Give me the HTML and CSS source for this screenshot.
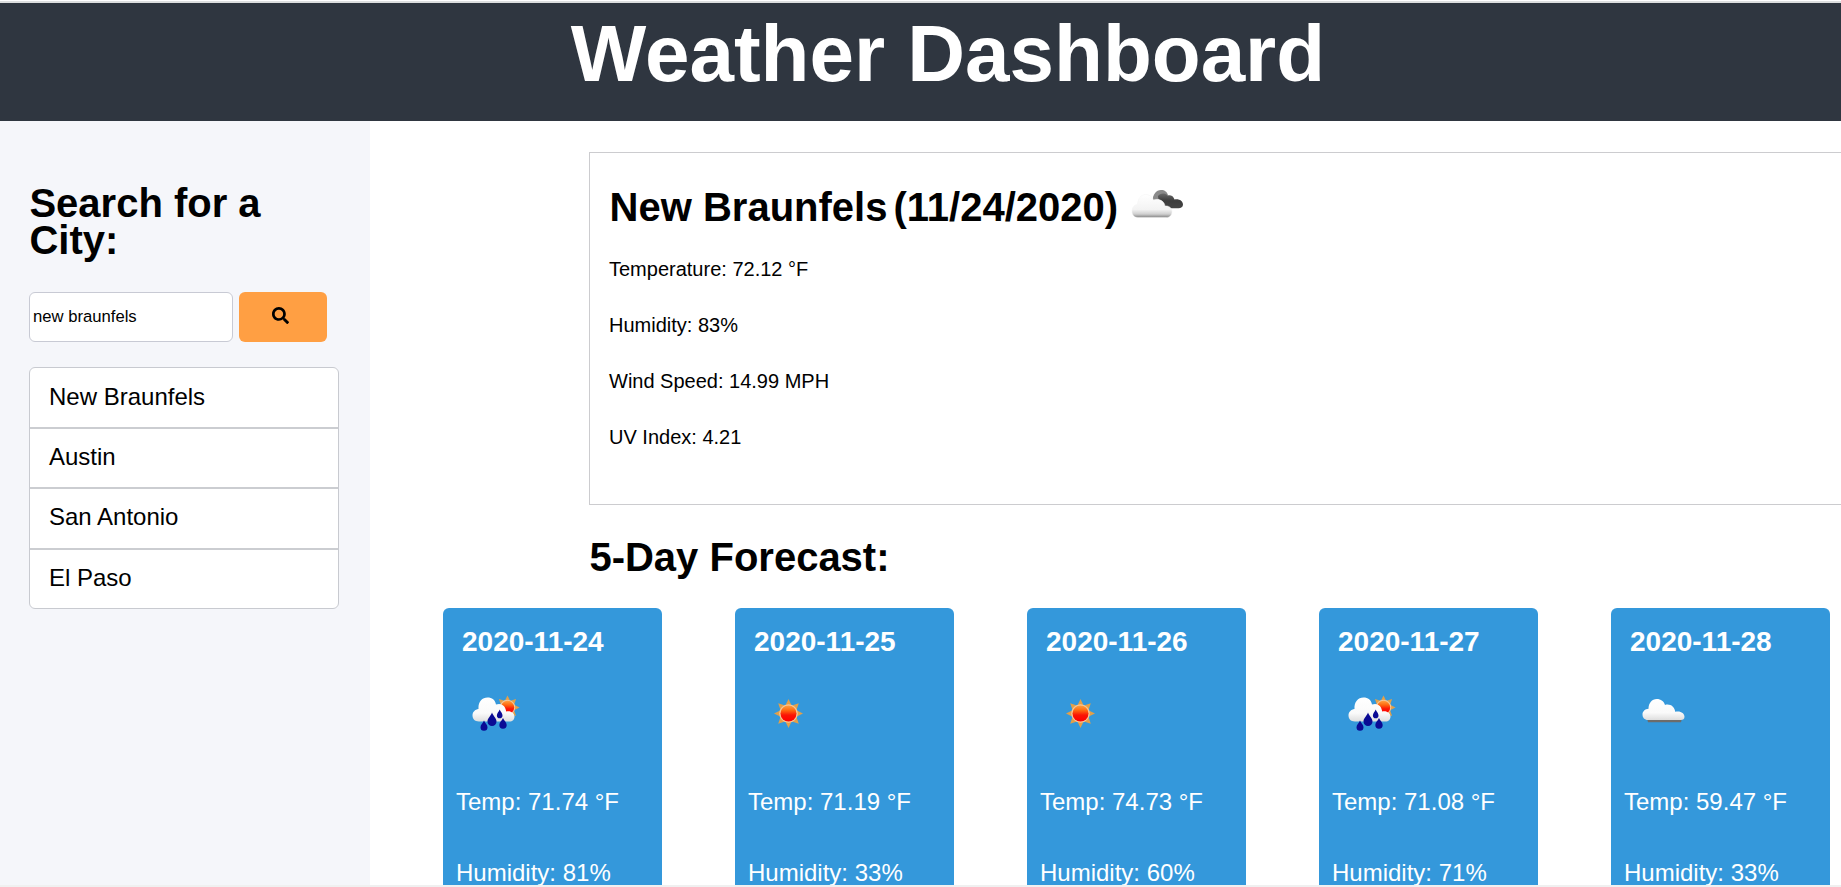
FILE: index.html
```
<!DOCTYPE html>
<html lang="en">
<head>
<meta charset="utf-8">
<title>Weather Dashboard</title>
<link rel="stylesheet" href="styles.css">
</head>
<body>
<svg class="defs" width="0" height="0" aria-hidden="true">
  <defs>
    <linearGradient id="cloudFill" x1="0" y1="0" x2="0" y2="1">
      <stop offset="0" stop-color="#ffffff"/><stop offset=".65" stop-color="#fafafa"/><stop offset="1" stop-color="#dedede"/>
    </linearGradient>
    <linearGradient id="shadeFill" x1="0" y1="0" x2="0" y2="1">
      <stop offset="0" stop-color="#ffffff"/><stop offset=".65" stop-color="#f3f3f3"/><stop offset=".85" stop-color="#d0d0d0"/><stop offset="1" stop-color="#858585"/>
    </linearGradient>
    <linearGradient id="darkFill" x1="0" y1="0" x2="0" y2="1">
      <stop offset="0" stop-color="#6a6a6a"/><stop offset=".5" stop-color="#3c3c3c"/><stop offset="1" stop-color="#444444"/>
    </linearGradient>
    <linearGradient id="sunFill" x1="0" y1="0" x2="0" y2="1">
      <stop offset="0" stop-color="#ffa040"/><stop offset=".3" stop-color="#ff6a10"/><stop offset=".6" stop-color="#fb1505"/><stop offset="1" stop-color="#ff0000"/>
    </linearGradient>
    <symbol id="sun" viewBox="0 0 30 30">
      <path fill="#e2a04a" d="M15 .5l3 6.200h-6zM15 29.500l-3-6.200h6zM.5 15l6.200-3v6zM29.500 15l-6.200 3v-6zM4.700 4.700l6.800 2.300-4.500 4.500zM25.300 4.700l-2.300 6.800-4.500-4.500zM4.700 25.300l2.300-6.800 4.500 4.500zM25.300 25.300l-6.800-2.300 4.500-4.500z"/>
      <circle cx="15" cy="15" r="9.300" fill="#f6c79a"/>
      <circle cx="15" cy="15" r="8" fill="url(#sunFill)"/>
    </symbol>
    <symbol id="rain" viewBox="0 0 63 63">
      <use href="#sun" x="30" y="13" width="25" height="25"/>
      <path fill="url(#cloudFill)" d="M14 39.500C9.500 39.500 7.500 36.500 7.500 33.500C7.500 30 10 27.500 13.500 27C13 20 17 15.500 22.500 15.500C27 15.500 30.300 18 31 22.500C36 20.500 40.500 23.500 41.200 29.500C45.500 28.300 49.500 31 49.500 34.500C49.500 37.500 47.500 39.500 44.500 39.500Z"/>
      <path fill="#0a0a94" d="M27 30.500c1.500 4 4.500 5.500 4.500 9a4.500 4.500 0 0 1-9 0c0-3.500 3-5 4.500-9zM34.700 27.500c1 2.600 2.800 3.700 2.800 5.900a2.800 2.800 0 0 1-5.600 0c0-2.200 1.800-3.300 2.800-5.900zM38 36c1.200 3 3.700 4.300 3.700 7a3.700 3.700 0 0 1-7.400 0c0-2.700 2.500-4 3.700-7zM19 38.500c1.200 3 3.500 4.200 3.500 6.700a3.500 3.500 0 0 1-7 0c0-2.500 2.300-3.700 3.500-6.700z"/>
    </symbol>
    <symbol id="clear" viewBox="0 0 63 63">
      <use href="#sun" x="16.500" y="16.500" width="30" height="30"/>
    </symbol>
    <symbol id="cloud" viewBox="0 0 63 63">
      <path fill="#6d6c6b" d="M14 36h35l-1 4.300H15z"/>
      <path fill="url(#cloudFill)" d="M15 38C11.500 38 9.500 35.500 9.500 32.500C9.500 29.500 12 27 15.500 26.800C15.500 21 19 17 23.700 17C28 17 31 19.500 32 23C37 21.500 41.500 24.500 42.200 29.800C47 28.300 51.500 31 51.500 34.800C51.500 37 50 38 48 38Z"/>
    </symbol>
  </defs>
</svg>

<header class="header"><h1 class="header-title">Weather Dashboard</h1></header>

<div class="layout">
  <aside class="sidebar">
    <h2 class="sidebar-title">Search for a City:</h2>
    <form class="search">
      <input class="search-input" type="text" value="new braunfels" aria-label="City">
      <button class="search-button" type="button" aria-label="Search">
        <svg width="17" height="17" viewBox="0 0 512 512"><path d="M505 442.700L405.300 343c-4.500-4.500-10.600-7-17-7H372c27.600-35.300 44-79.700 44-128C416 93.100 322.900 0 208 0S0 93.100 0 208s93.100 208 208 208c48.300 0 92.700-16.400 128-44v16.300c0 6.400 2.500 12.500 7 17l99.700 99.700c9.400 9.400 24.600 9.400 33.900 0l28.300-28.300c9.400-9.400 9.400-24.600.1-34zM208 336c-70.700 0-128-57.200-128-128 0-70.700 57.200-128 128-128 70.700 0 128 57.200 128 128 0 70.700-57.200 128-128 128z"/></svg>
      </button>
    </form>
    <ul class="history">
      <li class="history-item">New Braunfels</li>
      <li class="history-item">Austin</li>
      <li class="history-item">San Antonio</li>
      <li class="history-item">El Paso</li>
    </ul>
  </aside>

  <main class="content">
    <section class="current">
      <div class="current-heading">
        <h2 class="current-name">New Braunfels</h2>
        <h2 class="current-name">(11/24/2020)</h2>
        <svg class="current-icon" width="54" height="40" viewBox="0 0 54 40">
          <path fill="#8a8a8a" d="M21.500 14C22 7 25 3 30 3C34 3 36 5 37 8L33 15Z"/>
          <path fill="url(#darkFill)" d="M27 9C29 6 34 5.500 36.500 8.500C39.500 7.500 42.500 9 43.500 12.500C48 11.500 52 14 52 17.500C52 20 50 21.200 47.500 21.200H37C34 21.200 32 18 32 15.500C29 15 27 12 27 9Z"/>
          <path fill="url(#shadeFill)" stroke="#f2f2f2" stroke-width=".5" d="M7 30.500C3 30.500 1 27.500 1 24.500C1 20.500 3.500 17.500 6.500 17.500C7 11.500 10 7.500 14.500 7.500C18.500 7.500 21 9.500 22.500 13C27.500 11 33.500 14 34 19C38 18.500 41 21 41 24.500C41 28 39 30.500 35.500 30.500Z"/>
        </svg>
      </div>
      <p class="current-line">Temperature: 72.12 °F</p>
      <p class="current-line">Humidity: 83%</p>
      <p class="current-line">Wind Speed: 14.99 MPH</p>
      <p class="current-line">UV Index: 4.21</p>
    </section>

    <h2 class="forecast-title">5-Day Forecast:</h2>
    <section class="forecast">
      <article class="card">
        <h3 class="card-date">2020-11-24</h3>
        <svg class="card-icon"><use href="#rain"/></svg>
        <p class="card-line">Temp: 71.74 °F</p>
        <p class="card-line">Humidity: 81%</p>
      </article>
      <article class="card">
        <h3 class="card-date">2020-11-25</h3>
        <svg class="card-icon"><use href="#clear"/></svg>
        <p class="card-line">Temp: 71.19 °F</p>
        <p class="card-line">Humidity: 33%</p>
      </article>
      <article class="card">
        <h3 class="card-date">2020-11-26</h3>
        <svg class="card-icon"><use href="#clear"/></svg>
        <p class="card-line">Temp: 74.73 °F</p>
        <p class="card-line">Humidity: 60%</p>
      </article>
      <article class="card">
        <h3 class="card-date">2020-11-27</h3>
        <svg class="card-icon"><use href="#rain"/></svg>
        <p class="card-line">Temp: 71.08 °F</p>
        <p class="card-line">Humidity: 71%</p>
      </article>
      <article class="card">
        <h3 class="card-date">2020-11-28</h3>
        <svg class="card-icon"><use href="#cloud"/></svg>
        <p class="card-line">Temp: 59.47 °F</p>
        <p class="card-line">Humidity: 33%</p>
      </article>
    </section>
  </main>
</div>
</body>
</html>
```
FILE: styles.css
```
* { box-sizing: border-box; margin: 0; padding: 0; }

html { background: #fff; overflow: hidden; }

body {
  display: flex;
  flex-direction: column;
  height: 887px;
  padding-top: 1px;
  border-bottom: 2px solid #f0f0f0;
  overflow: hidden;
  font-family: "Liberation Sans", Arial, sans-serif;
  font-size: 20px;
  color: #000;
}

.defs { position: absolute; }

.header {
  flex: none;
  width: 1896px;
  height: 120px;
  padding-top: 11px;
  border-top: 2px solid #dcdedf;
  background: #2f3640;
  text-align: center;
}

.header-title { font-size: 80px; line-height: 80px; color: #fff; }

.layout { display: flex; flex: 1; min-height: 0; overflow: hidden; }

.sidebar {
  flex: none;
  width: 370px;
  padding: 64px 31px 0 29px;
  background: #f5f6fa;
}

.sidebar-title { padding-left: .4px; font-size: 40px; line-height: 37px; }

.search { display: flex; gap: 6px; margin-top: 33px; }

.search-input {
  width: 204px;
  height: 50px;
  padding: 0 3px 1px;
  border: 1px solid #c8cad4;
  border-radius: 6px;
  background: #fff;
  font: 16.67px "Liberation Sans", Arial, sans-serif;
  color: #000;
}

.search-button {
  display: flex;
  align-items: center;
  justify-content: center;
  width: 88px;
  height: 50px;
  padding: 0 6px 4px 0;
  border: 0;
  border-radius: 6px;
  background: #ff9f43;
}

.history {
  margin-top: 25px;
  border: 1px solid #c8cad0;
  border-radius: 6px;
  background: #fff;
  list-style: none;
}

.history-item {
  height: 59px;
  padding-left: 19px;
  font-size: 24px;
  line-height: 58px;
}

.history-item + .history-item {
  height: 60.3px;
  border-top: 2px solid #cbcdd1;
  line-height: 56px;
}

.content { flex: none; width: 1500px; padding-top: 31px; }

.current {
  width: 1300px;
  height: 353px;
  margin-left: 219px;
  padding: 34px 20px 0 19px;
  border: 1px solid #cccccf;
}

.current-heading {
  display: flex;
  gap: 6px;
  height: 40px;
  margin-bottom: 30px;
  padding-left: .6px;
}

.current-name { font-size: 40px; line-height: 40px; }

.current-icon { flex: none; margin-left: 7px; }

.current-line { margin-bottom: 32px; line-height: 24px; }

.forecast-title {
  margin: 32px 0 31px 219.4px;
  font-size: 40px;
  line-height: 40px;
}

.forecast { display: flex; gap: 73px; padding-left: 73px; }

.card {
  flex: none;
  width: 219px;
  height: 380px;
  padding: 20px 13px;
  border-radius: 6px;
  background: #3498db;
  color: #fff;
}

.card-date { padding-left: 6px; font-size: 28px; line-height: 28px; }

.card-icon {
  display: block;
  width: 63px;
  height: 63px;
  margin: 26px 0 45px 9px;
}

.card-line { margin-bottom: 47px; font-size: 24px; line-height: 24px; }
```
